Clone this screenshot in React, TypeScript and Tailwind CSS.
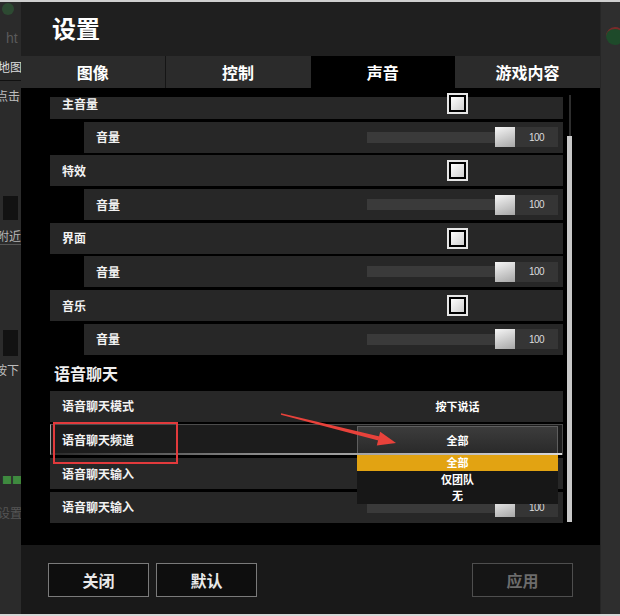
import React from "react";

const F = "font-['Noto_Sans_CJK_SC','Noto_Sans',sans-serif]";

function Checkbox() {
  return (
    <div className="w-[21px] h-[21px] border-2 border-[#e6e6e6] bg-black p-[2px]">
      <div className="w-full h-full bg-[linear-gradient(135deg,#ffffff,#cfcfcf)]" />
    </div>
  );
}

function Slider() {
  return (
    <div className="flex items-center w-full h-[20px]">
      <div className="ml-[10px] flex-1 h-[11px] bg-[#3a3a3a]" />
      <div className="w-[20px] h-[20px] bg-[linear-gradient(160deg,#f6f6f6,#a6a6a6)]" />
      <div className="w-[43px] h-[20px] bg-[#353535] flex items-center justify-center text-[10px] text-[#dcdcdc] font-['Liberation_Sans',sans-serif] tracking-[-0.5px]">
        100
      </div>
    </div>
  );
}

function Row({
  label,
  sub,
  first,
  children,
}: {
  label: string;
  sub?: boolean;
  first?: boolean;
  children?: React.ReactNode;
}) {
  const base = "h-[31px] shrink-0 flex items-center";
  const bg = first
    ? "bg-[linear-gradient(to_bottom,#000_9px,#272727_9px)]"
    : "bg-[#272727]";
  return (
    <div className={`${base} ${bg} ${sub ? "ml-[34px]" : ""}`}>
      <span className="pl-[12px] flex-1 text-[12px] font-bold text-[#f2f2f2] leading-none">
        {label}
      </span>
      <div className="w-[201px] mr-[5px] flex justify-center items-center">{children}</div>
    </div>
  );
}

function FocusRow() {
  return (
    <div className="relative z-10 h-[31px] shrink-0 flex items-center bg-[#1c1c1c] border border-[#4c4c4c] border-l-[#a0a0a0]">
      <span className="pl-[11px] flex-1 text-[12px] font-bold text-[#f2f2f2] leading-none">
        语音聊天频道
      </span>
      <div className="relative w-[201px] mr-[4px]">
        <div className="h-[28px] border border-[#5e5e5e] bg-[linear-gradient(to_bottom,#3c3c3c,#2a2a2a)] flex items-center justify-center text-[11px] font-bold text-white">
          全部
        </div>
        <div className="absolute left-0 top-full w-full bg-[#171717] flex flex-col text-[11px] font-bold text-white leading-none">
          <div className="h-[17px] bg-[#e2a312] flex items-center justify-center">全部</div>
          <div className="h-[17px] flex items-center justify-center">仅团队</div>
          <div className="h-[16px] flex items-center justify-center">无</div>
        </div>
      </div>
      <div className="absolute left-0 right-0 bottom-[-1px] h-[2px] bg-[linear-gradient(to_right,#2a2a2a,#888_40%,#d8d8d8)]" />
      <div className="absolute left-[2px] top-[-3px] w-[125px] h-[42px] border-2 border-[#e23a3c]" />
    </div>
  );
}

export default function App() {
  return (
    <div className={`relative w-[620px] h-[616px] bg-[#2c2c2c] overflow-hidden flex flex-col ${F}`}>
      <div className="h-[2px] bg-[#cfcfcf] shrink-0" />
      <div className="flex flex-1 min-h-0">
        {/* background app strip left */}
        <div className="w-[21px] shrink-0 bg-[#2b2b2b] flex flex-col overflow-hidden text-[12px] leading-none whitespace-nowrap">
          <div className="mt-[1px] ml-[2px] w-[12px] h-[12px] rounded-full bg-[#2d4a32]" />
          <div className="mt-[16px] ml-[6px] text-[14px] text-[#5a5a5a] font-['Liberation_Sans',sans-serif]">ht</div>
          <div className="mt-[16px] ml-[-2px] text-[#dcdcdc]">地图</div>
          <div className="mt-[7px] h-[1px] bg-[#111]" />
          <div className="mt-[9px] ml-[-4px] text-[#bdbdbd]">点击</div>
          <div className="mt-[94px] ml-[3px] w-[15px] h-[24px] bg-[#121212]" />
          <div className="mt-[10px] ml-[-3px] text-[#b5b5b5]">附近</div>
          <div className="mt-[2px] h-[1px] bg-[#555]" />
          <div className="mt-[85px] ml-[3px] w-[15px] h-[26px] bg-[#121212]" />
          <div className="mt-[8px] ml-[-5px] text-[#bdbdbd]">按下</div>
          <div className="mt-[99px] ml-[2px] text-[10px] text-[#3f8a3f]">■■</div>
          <div className="mt-[22px] ml-[-2px] text-[#555]">设置</div>
        </div>

        {/* dialog */}
        <div className="w-[579px] shrink-0 flex flex-col bg-black">
          <div className="h-[54px] shrink-0 bg-[#1f1f1f] flex items-center pl-[31px] pb-[3px]">
            <span className="text-[24px] font-bold text-white leading-none">设置</span>
          </div>
          <div className="h-[32px] shrink-0 grid grid-cols-4 text-[16px] font-bold text-white">
            <div className="bg-[#2b2b2b] border-r border-[#151515] flex items-center justify-center">图像</div>
            <div className="bg-[#2b2b2b] flex items-center justify-center">控制</div>
            <div className="bg-black flex items-center justify-center">声音</div>
            <div className="bg-[#2b2b2b] flex items-center justify-center">游戏内容</div>
          </div>

          <div className="h-[457px] shrink-0 flex bg-black">
            <div className="ml-[29px] w-[513px] flex flex-col gap-[2.7px] overflow-hidden">
              <Row label="主音量" first>
                <Checkbox />
              </Row>
              <Row label="音量" sub>
                <Slider />
              </Row>
              <Row label="特效">
                <Checkbox />
              </Row>
              <Row label="音量" sub>
                <Slider />
              </Row>
              <Row label="界面">
                <Checkbox />
              </Row>
              <Row label="音量" sub>
                <Slider />
              </Row>
              <Row label="音乐">
                <Checkbox />
              </Row>
              <Row label="音量" sub>
                <Slider />
              </Row>
              <div className="h-[30.5px] shrink-0 flex items-center pl-[4px] text-[16px] font-bold text-[#eeeeee] leading-none">
                语音聊天
              </div>
              <Row label="语音聊天模式">
                <span className="text-[11px] font-bold text-white">按下说话</span>
              </Row>
              <FocusRow />
              <Row label="语音聊天输入">
                <Slider />
              </Row>
              <Row label="语音聊天输入">
                <Slider />
              </Row>
            </div>
            <div className="ml-[4px] w-[5px] flex flex-col items-center">
              <div className="mt-[7px] h-[41px] w-[2px] bg-[#2e2e2e]" />
              <div className="h-[386px] w-[5px] bg-[#c9c9c9]" />
            </div>
          </div>

          <div className="flex-1 bg-[#191919] flex items-start px-[27px] pt-[18px] gap-[7px]">
            <div className="w-[101px] h-[34px] border border-[#7a7a7a] bg-[#0e0e0e] flex items-center justify-center text-[16px] font-bold text-[#e8e8e8]">
              关闭
            </div>
            <div className="w-[101px] h-[34px] border border-[#7a7a7a] bg-[#0e0e0e] flex items-center justify-center text-[16px] font-bold text-[#e8e8e8]">
              默认
            </div>
            <div className="ml-auto w-[101px] h-[34px] border border-[#4e4e4e] bg-[#151515] flex items-center justify-center text-[16px] font-bold text-[#6c6c6c]">
              应用
            </div>
          </div>
        </div>

        {/* background app strip right */}
        <div className="flex-1 bg-[#2e2e2e] flex flex-col border-l border-[#262626]">
          <div className="mt-[25px] ml-[5px] w-[18px] h-[18px] rounded-full bg-[#1e4a2a] border-t-2 border-[#7a2a2a]" />
        </div>
      </div>
      <div className="h-[2px] bg-[#d6d6d6] shrink-0" />

      <svg
        className="absolute left-0 top-0 z-30 pointer-events-none"
        width="620"
        height="616"
        viewBox="0 0 620 616"
      >
        <polygon
          points="281.1,413.3 379.6,436.6 378.4,440.6 280.9,414.7"
          fill="#e8423b"
        />
        <polygon points="396,443 380.2,431.8 376.8,445.4" fill="#e8423b" />
      </svg>
    </div>
  );
}
